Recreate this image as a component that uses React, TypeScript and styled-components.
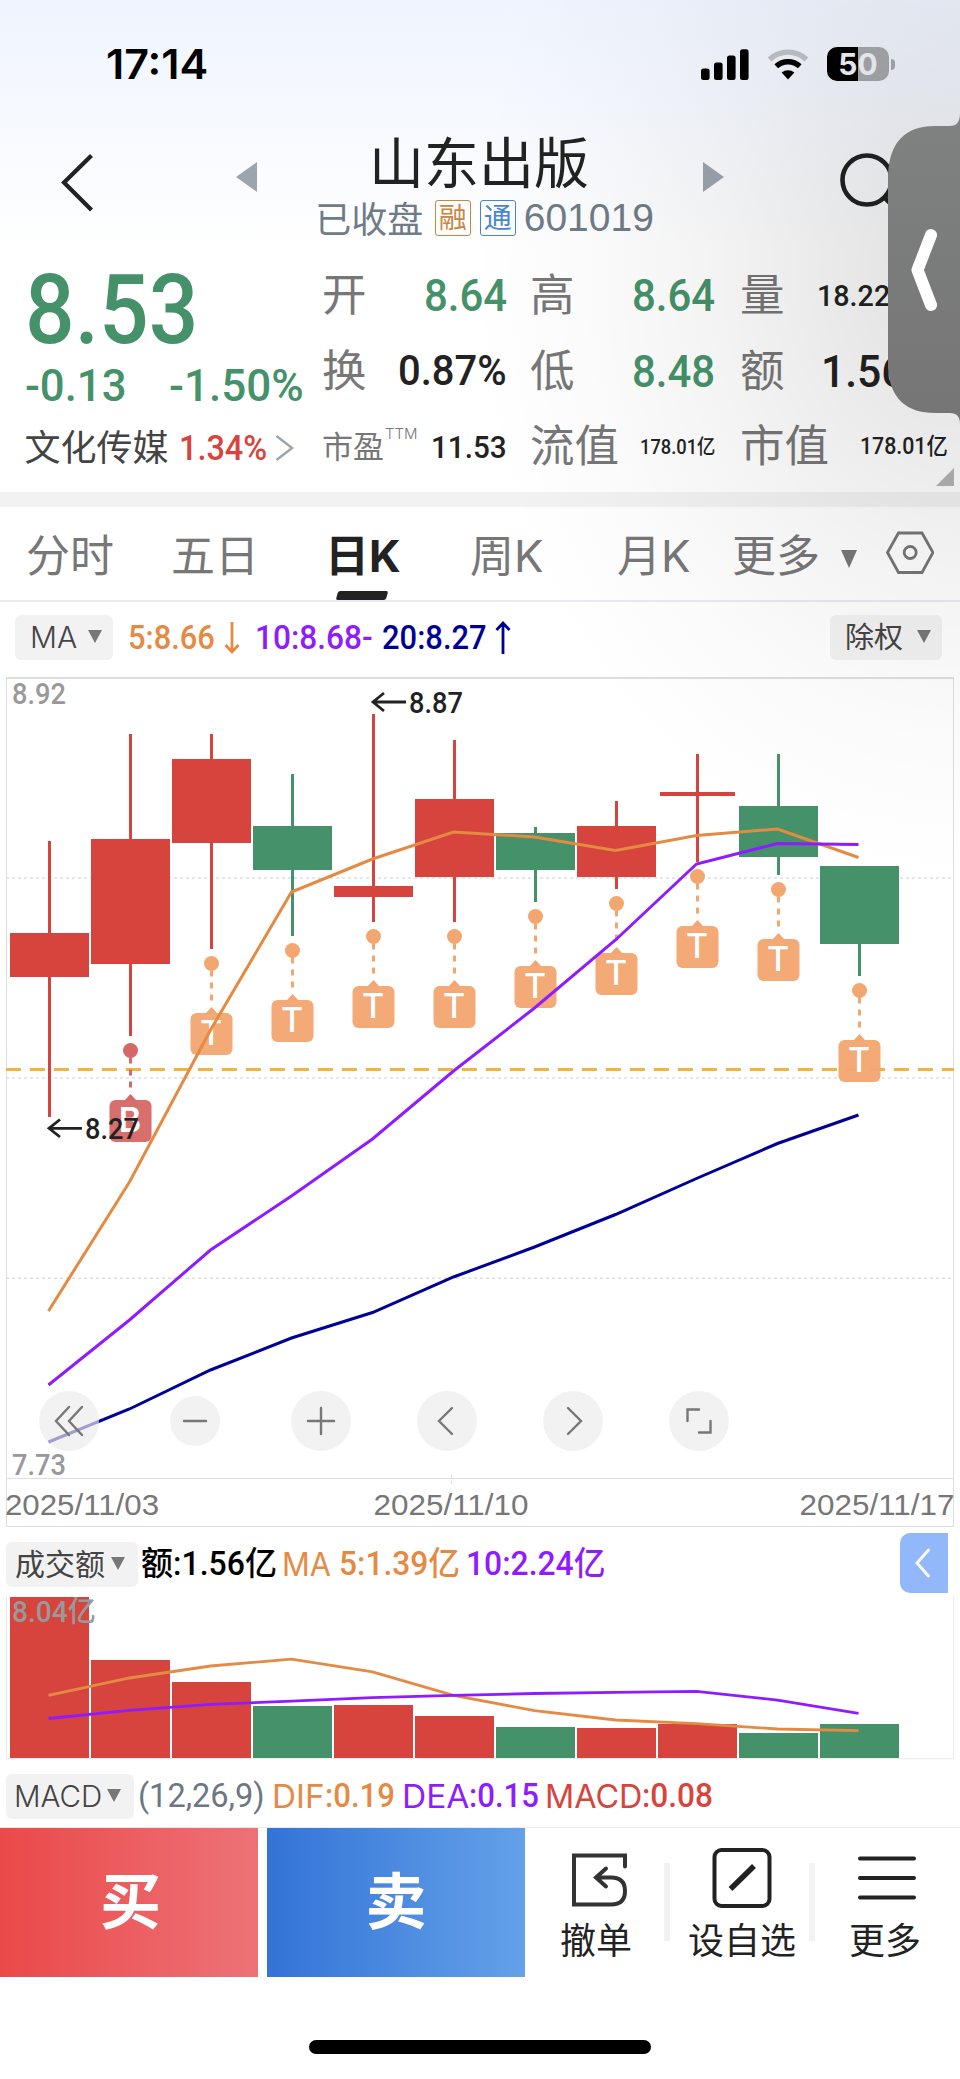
import React, { useLayoutEffect, useRef, useState } from "react";
import styled, { createGlobalStyle, css } from "styled-components";

const GREEN = "#45926a";
const RED = "#d6443d";
const ORANGE = "#e58a43";
const PURPLE = "#8f1cff";
const NAVY = "#000096";
const CJK = '"Noto Sans CJK SC", sans-serif';
const NUM = 'Roboto, "Noto Sans CJK SC", sans-serif';
const UI = 'Inter, "Noto Sans CJK SC", sans-serif';

const Global = createGlobalStyle`
  * { box-sizing: border-box; }
  body { margin: 0; background: #fff; }
`;

const Screen = styled.main`
  position: relative;
  width: 960px;
  height: 2079px;
  overflow: hidden;
  background: linear-gradient(180deg, #eff4fe 0, #fff 250px);
  color: #222;
  font-family: ${CJK};
  display: flex;
  flex-direction: column;
`;

/* Condensed numeral run: keeps a fixed advance whatever the font's own width. */
const FitBox = styled.span<{ $w: number; $size: number; $weight: number; $color?: string; $down: number; $font: string }>`
  display: block;
  flex: none;
  width: ${(p) => p.$w}px;
  height: ${(p) => p.$size}px;
  line-height: ${(p) => p.$size}px;
  margin-top: ${(p) => 2 * p.$down}px;
  font-family: ${(p) => p.$font};
  font-size: ${(p) => p.$size}px;
  font-weight: ${(p) => p.$weight};
  color: ${(p) => p.$color || "inherit"};
  white-space: pre;
`;
const FitText = styled.span`
  display: inline-block;
  transform-origin: left center;
`;

type FitProps = { w: number; size: number; weight?: number; color?: string; down?: number; font?: string; children: React.ReactNode };
function Fit({ w, size, weight = 500, color, down = 0, font = NUM, children }: FitProps) {
  const ref = useRef<HTMLSpanElement>(null);
  const [k, setK] = useState(1);
  useLayoutEffect(() => {
    if (ref.current) setK(w / ref.current.offsetWidth);
  }, [w]);
  return (
    <FitBox $w={w} $size={size} $weight={weight} $color={color} $down={down} $font={font}>
      <FitText ref={ref} style={{ transform: `scaleX(${k})` }}>{children}</FitText>
    </FitBox>
  );
}

/* ---------- status bar ---------- */
const StatusBar = styled.div`
  height: 110px;
  padding: 18px 65px 0 106px;
  display: flex;
  align-items: center;
  justify-content: space-between;
  color: #000;
`;
const StatusIcons = styled.div`
  display: flex;
  align-items: center;
`;
const Battery = styled.div`
  width: 62px;
  height: 34px;
  margin-left: 18px;
  border-radius: 10px;
  background: linear-gradient(90deg, #000 50%, #a7a9ad 50%);
  color: #f2f4f8;
  display: flex;
  align-items: center;
  justify-content: center;
  font: 700 30px/34px Inter, sans-serif;
`;
const BatteryCap = styled.i`
  width: 4px;
  height: 11px;
  margin-left: 2px;
  border-radius: 0 5px 5px 0;
  background: #a7a9ad;
`;

/* ---------- title bar ---------- */
const NavBar = styled.header`
  height: 140px;
  padding-left: 60px;
  display: flex;
`;
const NavIcon = styled.svg<{ $mt: number; $ml?: number }>`
  display: block;
  flex: none;
  margin: ${(p) => p.$mt}px 0 0 ${(p) => p.$ml || 0}px;
`;
const TitleBlock = styled.div`
  width: 446px;
  display: flex;
  flex-direction: column;
  align-items: center;
`;
const Title = styled.h1`
  margin: 16px 0 0;
  height: 67px;
  padding-right: 2px;
  font-size: 55px;
  line-height: 66px;
  font-weight: 400;
  white-space: nowrap;
`;
const SubTitle = styled.div`
  height: 50px;
  padding-left: 9px;
  display: flex;
  align-items: center;
  color: #6f7b87;
  font-size: 36px;
  line-height: 50px;
`;
const State = styled.span`
  margin-top: -3px;
`;
const Badge = styled.span<{ $c: string; $ml: number }>`
  width: 36px;
  height: 36px;
  margin-left: ${(p) => p.$ml}px;
  border: 1.5px solid ${(p) => p.$c};
  border-radius: 3px;
  color: ${(p) => p.$c};
  font-size: 28px;
  line-height: 31px;
  text-align: center;
`;
const Code = styled.span`
  margin-left: 8px;
  font-family: "Liberation Sans", sans-serif;
  font-size: 39px;
`;

/* ---------- quote ---------- */
const Quote = styled.section`
  position: relative;
  height: 242px;
  padding: 8px 0 0 25px;
  display: flex;
`;
const PriceCol = styled.div`
  width: 297px;
  color: ${GREEN};
`;
const Line = styled.div<{ $h: number; $mt?: number }>`
  height: ${(p) => p.$h}px;
  margin-top: ${(p) => p.$mt || 0}px;
  display: flex;
  align-items: center;
`;
const Gap = styled.i<{ $w: number }>`
  flex: none;
  width: ${(p) => p.$w}px;
`;
const Sector = styled.span`
  padding-bottom: 7px;
  margin-left: -0.5px;
  color: #444;
  font-size: 36px;
  line-height: 36px;
  white-space: nowrap;
`;
const StatCol = styled.div<{ $w: number; $gap: number }>`
  width: ${(p) => p.$w}px;
  margin-right: ${(p) => p.$gap}px;
  display: grid;
  grid-template-rows: repeat(3, 75.5px);
`;
const Stat = styled.div`
  display: flex;
  align-items: center;
  justify-content: space-between;
`;
const StatLabel = styled.span<{ $size?: number }>`
  display: flex;
  height: 64px;
  margin-bottom: ${(p) => (p.$size ? 4 : 7)}px;
  color: #777;
  font-size: ${(p) => p.$size || 44.5}px;
  line-height: 64px;
  white-space: nowrap;
`;
const Ttm = styled.sup`
  margin: 0 0 0 1px;
  padding-top: 11px;
  font: 300 15px/20px Inter, sans-serif;
`;
const Corner = styled.i`
  position: absolute;
  right: 6px;
  bottom: 6px;
  border-left: 18px solid transparent;
  border-bottom: 18px solid #b4b4b4;
`;
const Band = styled.div`
  height: 15px;
  background: #f2f2f2;
`;

/* ---------- period tabs ---------- */
const Tabs = styled.nav`
  height: 95px;
  padding-left: 26px;
  border-bottom: 2px solid #e9eaf2;
  background: #fff;
  display: grid;
  grid-template-columns: 145px 154px 145px 147px 115px 154px 1fr;
`;
const Tab = styled.div<{ $on?: boolean }>`
  position: relative;
  display: flex;
  align-items: center;
  gap: 21px;
  height: 91px;
  font-family: ${UI};
  font-size: 44px;
  font-weight: ${(p) => (p.$on ? 700 : 400)};
  color: ${(p) => (p.$on ? "#222" : "#777")};
  white-space: nowrap;
  ${(p) =>
    p.$on &&
    css`
      &::after {
        content: "";
        position: absolute;
        left: 12px;
        bottom: -2px;
        width: 50px;
        height: 9px;
        background: #222;
        border-radius: 2px;
        transform: skewX(-16deg);
      }
    `}
`;
const Caret = styled.i<{ $w?: number; $h?: number; $mt?: number }>`
  flex: none;
  border: solid transparent;
  border-width: ${(p) => p.$h || 13}px ${(p) => (p.$w || 14) / 2}px 0;
  border-top-color: #777;
  margin-top: ${(p) => p.$mt || 0}px;
`;

/* ---------- indicator rows ---------- */
const IndicatorRow = styled.div<{ $h: number; $pl: number; $pr?: number; $pb?: number; $pt?: number }>`
  height: ${(p) => p.$h}px;
  padding: ${(p) => p.$pt || 0}px ${(p) => p.$pr || 0}px ${(p) => p.$pb || 0}px ${(p) => p.$pl}px;
  background: #fff;
  display: flex;
  align-items: center;
`;
const Picker = styled.button<{ $w: number; $size: number; $pl: number; $pr: number; $weight?: number }>`
  flex: none;
  width: ${(p) => p.$w}px;
  height: 45px;
  padding: 0 ${(p) => p.$pr}px 0 ${(p) => p.$pl}px;
  border: 0;
  border-radius: 6px;
  background: #f2f2f2;
  color: #444;
  display: flex;
  align-items: center;
  justify-content: space-between;
  font: ${(p) => p.$weight || 400} ${(p) => p.$size}px/45px ${UI};
  white-space: nowrap;
`;
const Spacer = styled.i`
  flex: 1;
`;
const Collapse = styled.button`
  width: 48px;
  height: 60px;
  margin-top: -4px;
  padding: 0;
  border: 0;
  border-radius: 10px 0 0 10px;
  background: #92b8fa;
  display: flex;
  align-items: center;
  justify-content: center;
`;

/* ---------- charts ---------- */
const ChartPanel = styled.section`
  position: relative;
  background: #fff;
`;
const ChartSvg = styled.svg`
  display: block;
`;
const ZoomBar = styled.div`
  position: absolute;
  left: 39px;
  top: 714px;
  height: 60px;
  display: flex;
  align-items: center;
  gap: 66px;
`;
const Round = styled.button<{ $small?: boolean }>`
  width: ${(p) => (p.$small ? 50 : 60)}px;
  height: ${(p) => (p.$small ? 50 : 60)}px;
  margin: 0 ${(p) => (p.$small ? 5 : 0)}px;
  padding: 0;
  border: 0;
  border-radius: 50%;
  background: rgba(236, 236, 236, 0.67);
  display: flex;
  align-items: center;
  justify-content: center;
`;

/* ---------- bottom ---------- */
const ActionBar = styled.footer`
  height: 150px;
  border-top: 1px solid #ececec;
  background: #fff;
  display: flex;
`;
const Trade = styled.button<{ $from: string; $to: string; $shift: number }>`
  width: 258px;
  height: 149px;
  margin-right: 9px;
  padding: 0 0 9px ${(p) => p.$shift}px;
  border: 0;
  background: linear-gradient(90deg, ${(p) => p.$from}, ${(p) => p.$to});
  color: #fff;
  font: 700 61px/80px ${CJK};
`;
const Action = styled.div<{ $w: number; $pl?: number }>`
  width: ${(p) => p.$w}px;
  padding: 18px 0 0 ${(p) => p.$pl || 0}px;
  display: flex;
  flex-direction: column;
  align-items: center;
  white-space: nowrap;
`;
const ActionLabel = styled.span<{ $pr?: number }>`
  padding-right: ${(p) => p.$pr || 0}px;
  font-size: 36px;
  line-height: 52px;
  margin-top: 2px;
`;
const Divider = styled.i`
  width: 6px;
  height: 78px;
  margin-top: 35px;
  background: #f2f2f2;
`;
const HomeArea = styled.div`
  flex: 1;
  background: #fff;
  padding-top: 63px;
  display: flex;
  justify-content: center;
`;
const HomeBar = styled.i`
  width: 342px;
  height: 14px;
  border-radius: 7px;
  background: #000;
`;

/* ---------- floating side handle ---------- */
const Shade = styled.div`
  position: absolute;
  inset: 0;
  pointer-events: none;
  background: radial-gradient(
    ellipse 490px 610px at 960px 270px,
    rgba(0, 0, 0, 0.105) 0%,
    rgba(0, 0, 0, 0.1) 15%,
    rgba(0, 0, 0, 0.078) 30%,
    rgba(0, 0, 0, 0.048) 50%,
    rgba(0, 0, 0, 0.018) 74%,
    rgba(0, 0, 0, 0) 100%
  );
`;
const SideHandle = styled.svg`
  position: absolute;
  right: 0;
  top: 110px;
`;

type Candle = { up: boolean; hi: number; lo: number; top: number; bot: number; half?: number; mark?: string };
const candles: Candle[] = [
  { up: true, hi: 841, lo: 1117, top: 933, bot: 977 },
  { up: true, hi: 734, lo: 1036, top: 839, bot: 964, mark: "B" },
  { up: true, hi: 734, lo: 949, top: 759, bot: 843, mark: "T" },
  { up: false, hi: 774, lo: 936, top: 826, bot: 870, mark: "T" },
  { up: true, hi: 714, lo: 922, top: 886, bot: 897, mark: "T" },
  { up: true, hi: 740, lo: 922, top: 799, bot: 877, mark: "T" },
  { up: false, hi: 827, lo: 902, top: 833, bot: 870, mark: "T" },
  { up: true, hi: 801, lo: 889, top: 826, bot: 877, mark: "T" },
  { up: true, hi: 754, lo: 862, top: 792, bot: 796, half: 37.5, mark: "T" },
  { up: false, hi: 754, lo: 875, top: 806, bot: 857, mark: "T" },
  { up: false, hi: 866, lo: 976, top: 866, bot: 944, mark: "T" },
];
const volumes = [1597, 1660, 1682, 1706, 1705, 1716, 1727, 1728, 1724, 1733, 1724];
const ma5 = [1311, 1182, 1030, 892, 859, 832, 837, 850.5, 835.5, 829, 857.5];
const ma10 = [1385, 1320, 1250, 1196, 1139, 1071, 1008, 940, 864, 843.5, 844.5];
const ma20 = [1442, 1409, 1370, 1338, 1312.5, 1277, 1247, 1214.5, 1178.5, 1143.5, 1115];
const vol5 = [1695.4, 1678, 1666, 1659.2, 1671.8, 1695.4, 1710.6, 1720, 1723.6, 1729, 1730.6];
const vol10 = [1718.5, 1710.3, 1704.3, 1701.2, 1697.7, 1695.4, 1693.5, 1692.3, 1691.4, 1700.1, 1713.3];
const cx = (i: number) => 49.5 + 81 * i;
const pts = (ys: number[]) => ys.map((y, i) => `${cx(i) - 1},${y}`).join(" ");

function Marker({ x, low, kind }: { x: number; low: number; kind: string }) {
  const d = low + 14.5;
  const c = kind === "B" ? "#d66967" : "#f3a770";
  return (
    <g fill={c}>
      <circle cx={x} cy={d} r="7.5" />
      <path d={`M${x} ${d + 7}V${d + 38}`} stroke={c} strokeWidth="3" strokeDasharray="6 6" />
      <path d={`M${x - 6} ${d + 50}L${x} ${d + 43.5}L${x + 6} ${d + 50}Z`} />
      <rect x={x - 21} y={d + 49.5} width="42" height="42" rx="6" opacity=".96" />
      <text x={x - 0.5} y={d + 81.5} textAnchor="middle" fill="#fff" fontFamily="Inter, sans-serif" fontWeight={kind === "B" ? 600 : 500} fontSize="34">{kind}</text>
    </g>
  );
}

function SvgNum({ x, y, w, fill = "#999", size = 29, children }: { x: number; y: number; w: number; fill?: string; size?: number; children: string }) {
  return (
    <text x={x} y={y} textLength={w} lengthAdjust="spacingAndGlyphs" fill={fill} fontSize={size} fontFamily={NUM} fontWeight="500">{children}</text>
  );
}

function PriceChart() {
  return (
    <ChartSvg width="960" height="850" viewBox="0 677 960 850">
      <g stroke="#dedede" fill="none">
        <path d="M6 678H954" strokeWidth="2" />
        <path d="M6.5 678V1527M953.5 678V1527M6 1478.5H954M6 1526.5H954" />
        <path d="M6 878H953M6 1078H953M6 1278.3H953" strokeWidth="1.6" strokeDasharray="3 3" />
        <path d="M451.5 1475V1485" strokeDasharray="3 3" />
      </g>
      <path d="M6 1069.5H954" stroke="#f2b43f" strokeWidth="3" strokeDasharray="15 9" />
      {candles.map((c, i) => {
        const col = c.up ? RED : GREEN;
        const h = c.half || 39.5;
        return (
          <g key={i} fill={col}>
            <rect x={cx(i) - 1.5} y={c.hi} width="3" height={c.lo - c.hi} />
            <rect x={cx(i) - h} y={c.top} width={h * 2} height={c.bot - c.top} />
            {c.mark && <Marker x={cx(i)} low={c.lo} kind={c.mark} />}
          </g>
        );
      })}
      <g fill="none" strokeWidth="3">
        <polyline points={pts(ma5)} stroke={ORANGE} />
        <polyline points={pts(ma10)} stroke={PURPLE} />
        <polyline points={pts(ma20)} stroke={NAVY} />
      </g>
      <SvgNum x={12} y={704} w={54}>8.92</SvgNum>
      <SvgNum x={12} y={1475} w={54}>7.73</SvgNum>
      <SvgNum x={409} y={713} w={54} fill="#222">8.87</SvgNum>
      <SvgNum x={85} y={1139} w={54} fill="#222">8.27</SvgNum>
      <path d="M406 702H374M384 693L373 702L384 711M82 1128.3H50M60 1119.5L49 1128.3L60 1137" stroke="#222" strokeWidth="2.8" fill="none" />
      <g fill="#777" fontFamily='"Liberation Sans", sans-serif' fontSize="30.2">
        <text x="5" y="1515" textLength="154" lengthAdjust="spacingAndGlyphs">2025/11/03</text>
        <text x="373.5" y="1515" textLength="155" lengthAdjust="spacingAndGlyphs">2025/11/10</text>
        <text x="799.5" y="1515" textLength="155" lengthAdjust="spacingAndGlyphs">2025/11/17</text>
      </g>
    </ChartSvg>
  );
}

function VolumeChart() {
  return (
    <ChartSvg width="960" height="164" viewBox="0 1596 960 164">
      <path d="M6.5 1596V1759M953.5 1596V1759M6 1758.7H954" stroke="#eaeaea" fill="none" />
      {volumes.map((t, i) => (
        <rect key={i} x={cx(i) - 39.5} y={t} width="79" height={1758 - t} fill={candles[i].up ? RED : GREEN} />
      ))}
      <g fill="none" strokeWidth="2.8">
        <polyline points={pts(vol5)} stroke={ORANGE} />
        <polyline points={pts(vol10)} stroke={PURPLE} />
      </g>
      <SvgNum x={12} y={1622} w={84}>8.04亿</SvgNum>
    </ChartSvg>
  );
}

function Glyph({ d, w = 2.4, color = "#777" }: { d: string; w?: number; color?: string }) {
  return (
    <svg width="40" height="40" viewBox="0 0 40 40" fill="none" stroke={color} strokeWidth={w} strokeLinecap="round">
      <path d={d} />
    </svg>
  );
}

export default function App() {
  return (
    <Screen>
      <Global />
      <StatusBar>
        <Fit w={102} size={41} weight={600} font="Inter, sans-serif">17:14</Fit>
        <StatusIcons>
          <svg width="48" height="31" viewBox="0 0 48 31">
            <rect x="0" y="19.5" width="8.6" height="11.5" rx="2.5" />
            <rect x="13" y="13.5" width="8.6" height="17.5" rx="2.5" />
            <rect x="26" y="6.5" width="8.6" height="24.5" rx="2.5" />
            <rect x="39" y="0.3" width="8.6" height="30.7" rx="2.5" />
          </svg>
          <Gap $w={18} />
          <svg width="42" height="32" viewBox="0 0 42 32" fill="none">
            <path d="M2.5 11.5A27 27 0 0 1 39.5 11.5" stroke="#bfc2c8" strokeWidth="5.4" />
            <path d="M9.2 18.3A17.5 17.5 0 0 1 32.8 18.3" stroke="#000" strokeWidth="5.4" />
            <path d="M21 31.5L14.6 24.6A10 10 0 0 1 27.4 24.6Z" fill="#000" />
          </svg>
          <Battery>50</Battery>
          <BatteryCap />
        </StatusIcons>
      </StatusBar>

      <NavBar>
        <NavIcon $mt={42} width="36" height="60" viewBox="0 0 36 60" fill="none" stroke="#222" strokeWidth="4.2">
          <path d="M31.5 3.5L4 30.5L31.5 58" />
        </NavIcon>
        <NavIcon $mt={52} $ml={140} width="21" height="30" viewBox="0 0 21 30">
          <path d="M21 0V30L0 15Z" fill="#9ca4ad" />
        </NavIcon>
        <TitleBlock>
          <Title>山东出版</Title>
          <SubTitle>
            <State>已收盘</State>
            <Badge $c="#c8873e" $ml={11.5}>融</Badge>
            <Badge $c="#4a86cf" $ml={9}>通</Badge>
            <Code>601019</Code>
          </SubTitle>
        </TitleBlock>
        <NavIcon $mt={52} width="21" height="30" viewBox="0 0 21 30">
          <path d="M0 0V30L21 15Z" fill="#9ca4ad" />
        </NavIcon>
        <NavIcon $mt={42} $ml={113} width="56" height="60" viewBox="0 0 56 60" fill="none" stroke="#222" strokeWidth="4.6">
          <circle cx="30" cy="28" r="24.5" />
          <path d="M47 45L56 54" />
        </NavIcon>
      </NavBar>

      <Quote>
        <PriceCol>
          <Line $h={100}><Fit w={173} size={97} down={2}>8.53</Fit></Line>
          <Line $h={54}>
            <Fit w={102} size={45}>-0.13</Fit>
            <Gap $w={42} />
            <Fit w={135} size={45}>-1.50%</Fit>
          </Line>
          <Line $h={74} $mt={-1}>
            <Sector>文化传媒</Sector>
            <Gap $w={10} />
            <Fit w={88} size={35} color={RED}>1.34%</Fit>
            <Gap $w={8} />
            <svg width="20" height="28" viewBox="0 0 20 28" fill="none" stroke="#9ca4ad" strokeWidth="2.4">
              <path d="M1.5 2L17 14L1.5 26" />
            </svg>
          </Line>
        </PriceCol>
        <StatCol $w={184.5} $gap={23.5}>
          <Stat><StatLabel>开</StatLabel><Fit w={83} size={45} color={GREEN}>8.64</Fit></Stat>
          <Stat><StatLabel>换</StatLabel><Fit w={109} size={42.5}>0.87%</Fit></Stat>
          <Stat><StatLabel $size={31}>市盈<Ttm>TTM</Ttm></StatLabel><Fit w={76} size={32}>11.53</Fit></Stat>
        </StatCol>
        <StatCol $w={185} $gap={25}>
          <Stat><StatLabel>高</StatLabel><Fit w={83} size={45} color={GREEN}>8.64</Fit></Stat>
          <Stat><StatLabel>低</StatLabel><Fit w={83} size={45} color={GREEN}>8.48</Fit></Stat>
          <Stat><StatLabel>流值</StatLabel><Fit w={75} size={20.5}>178.01亿</Fit></Stat>
        </StatCol>
        <StatCol $w={208} $gap={12}>
          <Stat><StatLabel>量</StatLabel><Fit w={131} size={30}>18.22万手</Fit></Stat>
          <Stat><StatLabel>额</StatLabel><Fit w={127} size={45}>1.56亿</Fit></Stat>
          <Stat><StatLabel>市值</StatLabel><Fit w={88} size={23}>178.01亿</Fit></Stat>
        </StatCol>
        <Corner />
      </Quote>
      <Band />

      <Tabs>
        <Tab>分时</Tab>
        <Tab>五日</Tab>
        <Tab $on>日K</Tab>
        <Tab>周K</Tab>
        <Tab>月K</Tab>
        <Tab>更多<Caret $w={17} $h={18} $mt={12} /></Tab>
        <Tab>
          <svg width="48" height="44" viewBox="0 0 48 44" fill="none" stroke="#777" strokeWidth="2.8">
            <path d="M12.5 2H36L47 21.5L36 41.5H12.5L1.5 21.5Z" />
            <circle cx="24.2" cy="21.5" r="6" />
          </svg>
        </Tab>
      </Tabs>

      <IndicatorRow $h={75} $pl={15} $pr={18} $pb={4}>
        <Picker $w={98} $size={30} $pl={15} $pr={11} $weight={300}>MA<Caret $mt={-2} /></Picker>
        <Gap $w={15} />
        <Fit w={87} size={33} color={ORANGE}>5:8.66</Fit>
        <Gap $w={9} />
        <svg width="16" height="34" viewBox="0 0 16 34" fill="none" stroke={ORANGE} strokeWidth="2.8"><path d="M8 1V31M1.5 24L8 31L14.5 24" /></svg>
        <Gap $w={15} />
        <Fit w={118} size={33} color={PURPLE}>10:8.68-</Fit>
        <Gap $w={9} />
        <Fit w={105} size={33} color={NAVY}>20:8.27</Fit>
        <Gap $w={8} />
        <svg width="16" height="34" viewBox="0 0 16 34" fill="none" stroke={NAVY} strokeWidth="2.8"><path d="M8 33V2M1.5 9L8 2L14.5 9" /></svg>
        <Spacer />
        <Picker $w={112} $size={29} $pl={15} $pr={11}>除权<Caret $mt={-2} /></Picker>
      </IndicatorRow>

      <ChartPanel>
        <PriceChart />
        <ZoomBar>
          <Round><Glyph d="M20 6L7 20L20 34M33 6L20 20L33 34" /></Round>
          <Round $small><Glyph d="M9 20H31" /></Round>
          <Round><Glyph d="M7 20H33M20 7V33" /></Round>
          <Round><Glyph d="M25 7L12 20L25 33" /></Round>
          <Round><Glyph d="M15 7L28 20L15 33" /></Round>
          <Round><Glyph d="M8.5 20V8.5H20M20 31.5H31.5V20" /></Round>
        </ZoomBar>
      </ChartPanel>

      <IndicatorRow $h={69} $pl={6} $pr={12} $pt={6}>
        <Picker $w={132} $size={30} $pl={9} $pr={13}>成交额<Caret $mt={-2} /></Picker>
        <Gap $w={3} />
        <Fit w={136} size={32.5} color="#000">额:1.56亿</Fit>
        <Gap $w={5} />
        <Fit w={49} size={32} color={ORANGE} weight={400} font={UI}>MA</Fit>
        <Gap $w={8} />
        <Fit w={121} size={32.5} color={ORANGE}>5:1.39亿</Fit>
        <Gap $w={6} />
        <Fit w={139} size={32.5} color={PURPLE}>10:2.24亿</Fit>
        <Spacer />
        <Collapse><Glyph d="M24.5 7L13 20L24.5 33" color="#fff" w={2.8} /></Collapse>
      </IndicatorRow>
      <VolumeChart />
      <IndicatorRow $h={67} $pl={6} $pt={6}>
        <Picker $w={128} $size={29.5} $pl={8} $pr={13} $weight={350}>MACD<Caret $mt={-3} /></Picker>
        <Gap $w={4} />
        <Fit w={127} size={32.5} color="#6b7783" weight={450}>(12,26,9)</Fit>
        <Gap $w={7} />
        <Fit w={53} size={32} color={ORANGE} weight={400} font={UI}>DIF</Fit>
        <Fit w={70} size={32.5} color={ORANGE}>:0.19</Fit>
        <Gap $w={7} />
        <Fit w={67} size={32} color={PURPLE} weight={400} font={UI}>DEA</Fit>
        <Fit w={70} size={32.5} color={PURPLE}>:0.15</Fit>
        <Gap $w={6} />
        <Fit w={97} size={32} color={RED} weight={400} font={UI}>MACD</Fit>
        <Fit w={71} size={32.5} color={RED}>:0.08</Fit>
      </IndicatorRow>

      <ActionBar>
        <Trade $from="#eb4949" $to="#ed7277" $shift={3}>买</Trade>
        <Trade $from="#3373d6" $to="#64a1e9" $shift={0}>卖</Trade>
        <Action $w={130}>
          <svg width="60" height="64" viewBox="0 0 60 64" fill="none" stroke="#333" strokeWidth="4" strokeLinecap="round">
            <path d="M56 20.5V9.5H5V58.5H42Q56 58.5 56 45Q56 31.5 42 31.5H28M37 22.5L27 31.5L37 40.5" />
          </svg>
          <ActionLabel $pr={6}>撤单</ActionLabel>
        </Action>
        <Divider />
        <Action $w={139} $pl={5}>
          <svg width="60" height="64" viewBox="0 0 60 64" fill="none" stroke="#222" strokeWidth="4">
            <rect x="2.5" y="4" width="55" height="56" rx="7" />
            <path d="M18.5 43L42 20" strokeWidth="5.5" />
          </svg>
          <ActionLabel>设自选</ActionLabel>
        </Action>
        <Divider />
        <Action $w={144}>
          <svg width="60" height="64" viewBox="0 0 60 64" fill="none" stroke="#222" strokeWidth="4" strokeLinecap="round">
            <path d="M3 12.4H57M3 32H57M3 51.6H57" />
          </svg>
          <ActionLabel $pr={4}>更多</ActionLabel>
        </Action>
      </ActionBar>
      <HomeArea><HomeBar /></HomeArea>

      <Shade />
      <SideHandle width="72" height="320" viewBox="888 110 72 320">
        <defs>
          <linearGradient id="handle" x1="0" y1="0" x2="0" y2="1">
            <stop offset="0" stopColor="#808181" />
            <stop offset="1" stopColor="#757575" />
          </linearGradient>
        </defs>
        <path d="M960 113Q960 126 950 126H935Q890 126 888 175V368Q891 413 935 413H950Q960 413 960 424Z" fill="url(#handle)" />
        <path d="M931 235L917.5 270L931 305" fill="none" stroke="#fff" strokeWidth="12" strokeLinecap="round" strokeLinejoin="round" />
      </SideHandle>
    </Screen>
  );
}
